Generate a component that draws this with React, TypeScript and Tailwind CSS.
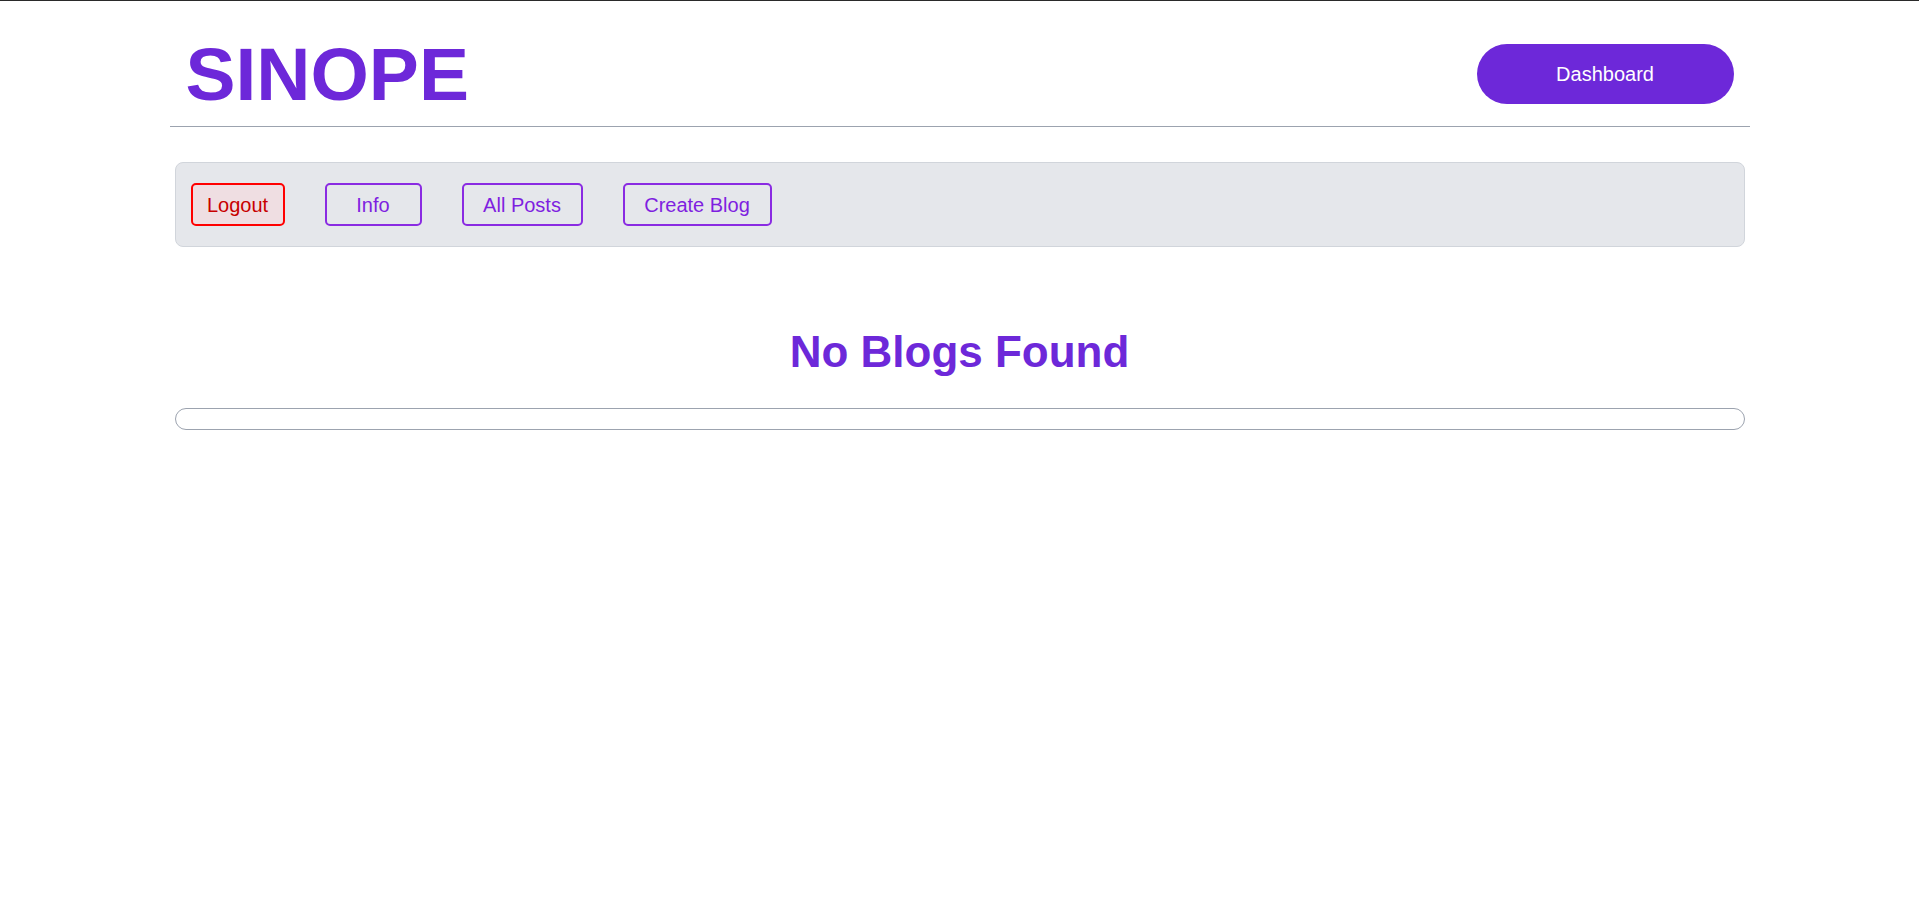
const navButtons = [
  { label: "Info", width: "w-[97px]" },
  { label: "All Posts", width: "w-[121px]" },
  { label: "Create Blog", width: "w-[149px]" },
];

export default function App() {
  return (
    <div className="min-h-[915px] bg-white border-t border-[#2a2a2a] font-['Liberation_Sans',Arial,sans-serif]">
      <div className="mx-auto w-[1580px]">
        <header className="flex items-center justify-between border-b border-[#9ca3af] px-4 pt-[43px] pb-[22px]">
          <h1 className="text-[75px] font-bold leading-[58px] text-[#6d28d9]">SINOPE</h1>
          <button className="flex h-[60px] w-[257px] items-center justify-center rounded-full bg-[#6d28d9] text-xl text-white">
            Dashboard
          </button>
        </header>

        <div className="mx-[5px]">
          <nav className="mt-[35px] flex h-[85px] items-center gap-10 rounded-lg border border-[#d1d5db] bg-[#e5e7eb] px-[15px]">
            <button className="flex h-[43px] w-[94px] items-center justify-center rounded-[5px] border-2 border-[#ff0000] bg-[#efdee2] text-xl text-[#c80000]">
              Logout
            </button>
            {navButtons.map((b) => (
              <button
                key={b.label}
                className={`flex h-[43px] ${b.width} items-center justify-center rounded-[5px] border-2 border-[#8a2be2] text-xl text-[#7f1fe0]`}
              >
                {b.label}
              </button>
            ))}
          </nav>

          <h2 className="mt-[83px] text-center text-[44px] font-bold leading-none text-[#6d28d9]">
            No Blogs Found
          </h2>

          <div className="mt-[34px] h-[22px] rounded-[11px] border border-[#9ca3af]" />
        </div>
      </div>
    </div>
  );
}
